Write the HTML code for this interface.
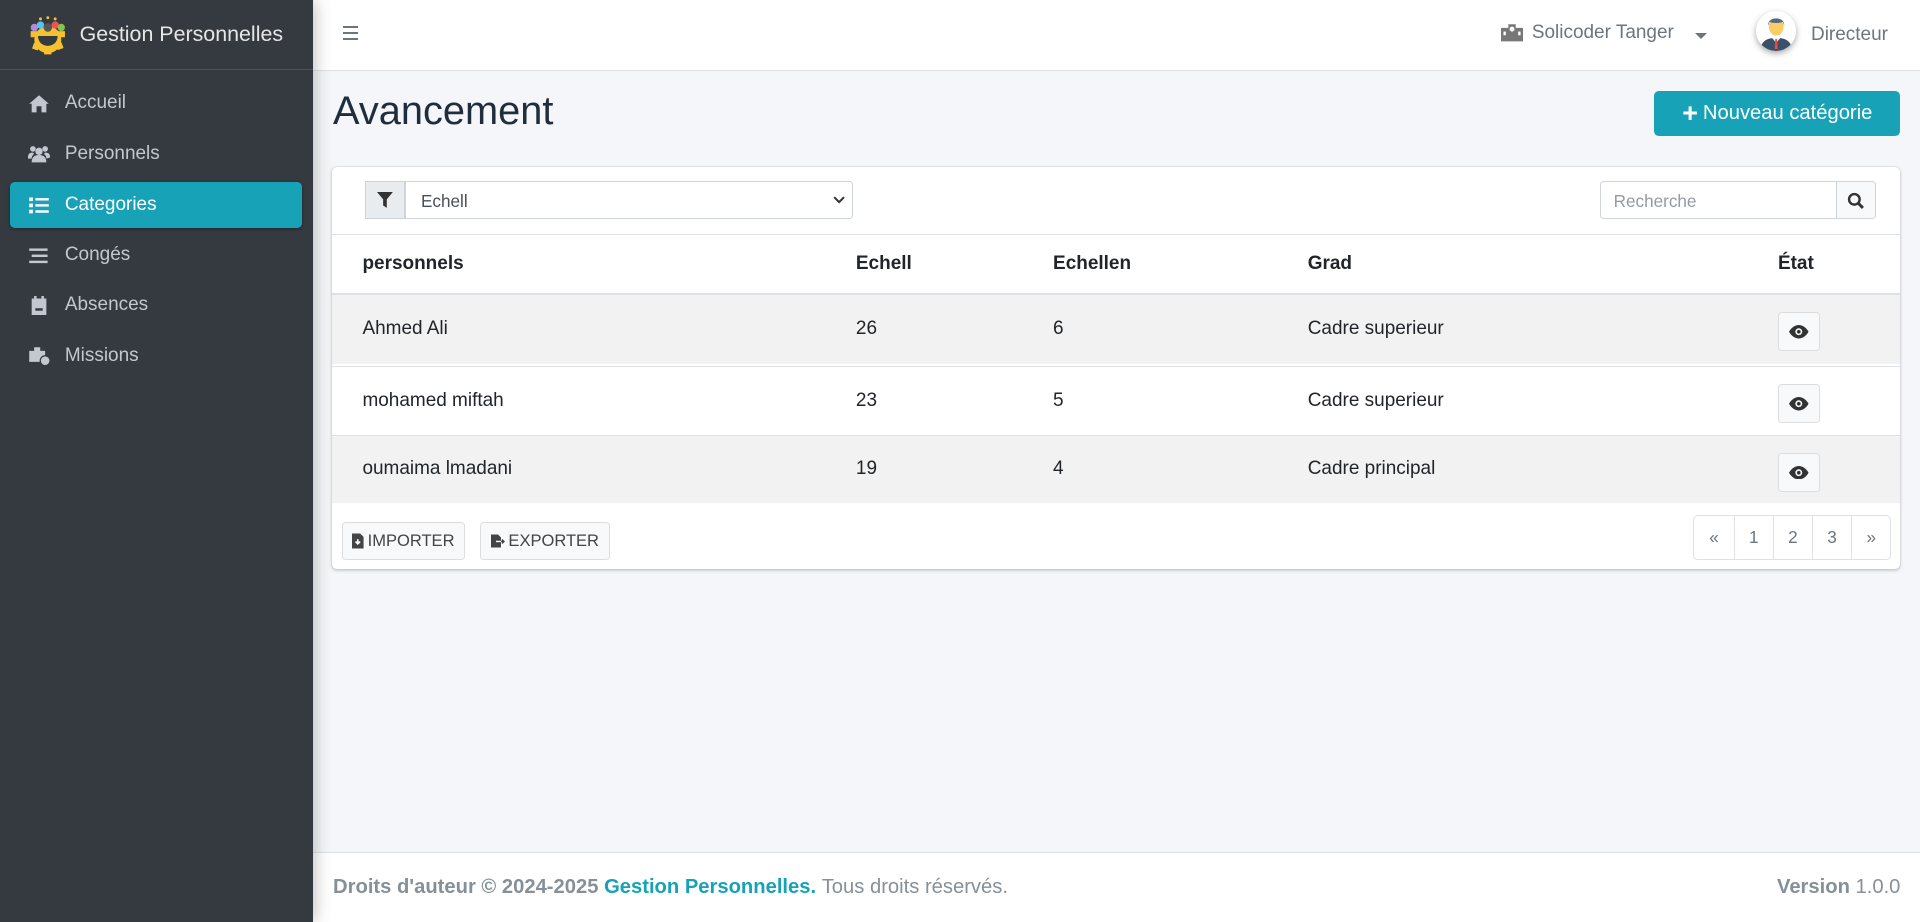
<!DOCTYPE html>
<html><head><meta charset="utf-8"><style>
html{zoom:1.22449}
*{box-sizing:border-box;margin:0;padding:0}
body{width:1568px;height:753px;overflow:hidden;font-family:"Liberation Sans",sans-serif;background:#f4f6f9;position:relative;color:#212529}
.sb{position:absolute;left:0;top:0;width:256px;height:753px;background:#343a40;box-shadow:0 0 14px rgba(0,0,0,.3);z-index:2}
.brand{height:57px;border-bottom:1px solid #4b545c;display:flex;align-items:center;padding-left:22px;color:#e6e6e6;font-size:17.5px}
.brand svg{margin-right:9px}
.it{position:absolute;left:8px;width:239px;height:37px;display:flex;align-items:center;padding-left:15px;color:#c2c7d0;font-size:15.5px;border-radius:4px}
.it svg{width:18px;height:16px;margin-right:12px;fill:#c2c7d0}
.it.on{background:#17a2b8;color:#fff;box-shadow:0 1px 3px rgba(0,0,0,.3)}
.it.on svg{fill:#fff}
.top{position:absolute;left:256px;top:0;right:0;height:58px;background:#fff;border-bottom:1px solid #dee2e6}
.title{position:absolute;left:272px;top:73px;font-size:32.5px;color:#1f2d3d}
.btn{position:absolute;left:1351px;top:74px;width:201px;height:37px;background:#17a2b8;border-radius:4px;color:#fff;font-size:16.5px;display:flex;align-items:center;justify-content:center}
.card{position:absolute;left:271px;top:136px;width:1281px;height:329px;background:#fff;border-radius:4px;box-shadow:0 0 1px rgba(0,0,0,.2),0 1px 3px rgba(0,0,0,.2);overflow:hidden}
.th{position:absolute;top:55px;left:0;right:0;height:50px;border-top:1px solid #dee2e6;border-bottom:2px solid #dee2e6;font-weight:bold;font-size:15.5px}
.row{position:absolute;left:0;right:0;height:56px;font-size:15.5px;border-top:1px solid #dee2e6}
.c{position:absolute;top:50%;transform:translateY(-50%)}
.eye{position:absolute;left:1181px;top:14px;width:34px;height:32px;border:1px solid #ddd;background:#f8f9fa;border-radius:3px;display:flex;align-items:center;justify-content:center}
.sbtn{position:absolute;top:290px;height:31px;border:1px solid #ddd;background:#f8f9fa;border-radius:3px;font-size:13.5px;display:flex;align-items:center;padding:0 8px 0 8px;color:#444}
.pg{position:absolute;left:1112px;top:285px;height:36px;display:flex;border:1px solid #dee2e6;border-radius:4px}
.pg div{width:32px;display:flex;align-items:center;justify-content:center;font-size:14px;color:#6c757d;border-left:1px solid #dee2e6}
.pg div:first-child{border-left:0}
.foot{position:absolute;left:256px;right:0;top:696px;height:57px;background:#fff;border-top:1px solid #dee2e6;font-size:16.5px;color:#869099;display:flex;align-items:center;padding:0 16px}
</style></head><body>
<div class="sb">
<div class="brand"><svg width="34" height="34" viewBox="0 0 34 34"><g fill="#f5c12e"><circle cx="17" cy="21" r="11"/><rect x="3" y="14" width="28" height="5"/><rect x="5" y="24" width="5" height="5" transform="rotate(20 7 26)"/><rect x="24" y="24" width="5" height="5" transform="rotate(-20 26 26)"/><rect x="14" y="28" width="6" height="5"/></g><path d="M9 18h16c0 5-3.5 8-8 8s-8-3-8-8z" fill="#343a40"/><circle cx="6" cy="11" r="3" fill="#b48ad8"/><circle cx="11" cy="9" r="3" fill="#4fc3f7"/><circle cx="17" cy="11" r="3.5" fill="#555"/><circle cx="23" cy="9" r="3" fill="#ef5350"/><circle cx="28" cy="11" r="3" fill="#8bc34a"/><circle cx="11" cy="4" r="1.2" fill="#f5c12e"/><circle cx="17" cy="3" r="1.2" fill="#f5c12e"/><circle cx="23" cy="4" r="1.2" fill="#f5c12e"/></svg>Gestion Personnelles</div>
<div class="it" style="top:66px"><svg viewBox="0 0 18 16"><path d="M9 1 1 8h2v7h4v-5h4v5h4V8h2z"/></svg>Accueil</div>
<div class="it" style="top:107px"><svg viewBox="0 0 18 16"><circle cx="4" cy="4" r="2.3"/><circle cx="14" cy="4" r="2.3"/><circle cx="9" cy="6" r="3"/><path d="M3 15c0-4 2-6 6-6s6 2 6 6zM0 11c0-3 1-4 4-4l1 1c-1 1-2 2-2 4H0zM18 11c0-3-1-4-4-4l-1 1c1 1 2 2 2 4z"/></svg>Personnels</div>
<div class="it on" style="top:149px"><svg viewBox="0 0 18 16"><rect x="1" y="2" width="3" height="3"/><rect x="1" y="7" width="3" height="3"/><rect x="1" y="12" width="3" height="3"/><rect x="6" y="2.5" width="11" height="2"/><rect x="6" y="7.5" width="11" height="2"/><rect x="6" y="12.5" width="11" height="2"/></svg>Categories</div>
<div class="it" style="top:190px"><svg viewBox="0 0 18 16"><rect x="1" y="2" width="15" height="2"/><rect x="3" y="7" width="13" height="2"/><rect x="1" y="12" width="15" height="2"/></svg>Congés</div>
<div class="it" style="top:231px"><svg viewBox="0 0 18 16"><path d="M3 2h12v14H3zM5 0h2v3H5zM11 0h2v3h-2z"/><rect x="6" y="10" width="6" height="2" fill="#343a40"/></svg>Absences</div>
<div class="it" style="top:272px"><svg viewBox="0 0 18 16"><path d="M1 4h13v9H1zM5 1h5v3H5z"/><circle cx="14" cy="12" r="4" fill="#c2c7d0" stroke="#343a40"/></svg>Missions</div>
</div>
<div class="top">
<div style="position:absolute;left:24px;top:21px;width:12px;"><div style="height:2px;background:#6c757d;margin-bottom:3px"></div><div style="height:2px;background:#6c757d;margin-bottom:3px"></div><div style="height:2px;background:#6c757d"></div></div>
<svg style="position:absolute;left:970px;top:19px" width="18" height="15" viewBox="0 0 18 15"><path d="M0 4h6V1h6v3h6v11H0z" fill="#777"/><rect x="2" y="7" width="2" height="3" fill="#fff"/><rect x="14" y="7" width="2" height="3" fill="#fff"/><circle cx="9" cy="5" r="2" fill="#fff"/></svg>
<div style="position:absolute;left:995px;top:18px;font-size:15.5px;color:#6c757d">Solicoder Tanger</div>
<div style="position:absolute;left:1128px;top:27px;border:5px solid transparent;border-top-color:#6c757d"></div>
<svg style="position:absolute;left:1178px;top:9px;border-radius:50%;box-shadow:0 2px 5px rgba(0,0,0,.35)" width="33" height="33" viewBox="0 0 33 33"><circle cx="16.5" cy="16.5" r="16.5" fill="#fff"/><path d="M4 29c2-6 7-7 12.5-7S27 23 29 29a16 16 0 0 1-25 0z" fill="#3a5068"/><path d="M13 22h7l-3.5 4z" fill="#eee"/><path d="M15.8 23h1.4l.6 8h-2.6z" fill="#e74c3c"/><ellipse cx="16.5" cy="13" rx="6" ry="7" fill="#f9cd64"/><path d="M10 12c-1-8 14-8 13 0l-1-3c-3 1-8 1-11 0z" fill="#556a7e"/></svg>
<div style="position:absolute;left:1223px;top:20px;font-size:15.5px;color:#6c757d">Directeur</div>
</div>
<div class="title">Avancement</div>
<div class="btn"><b style="font-size:22px;margin-right:4px">+</b>Nouveau catégorie</div>
<div class="card">
<div style="position:absolute;left:27px;top:12px;width:33px;height:31px;border:1px solid #ced4da;background:#e9ecef;display:flex;align-items:center;justify-content:center"><svg width="13" height="13" viewBox="0 0 13 13"><path d="M0 0h13L8 6v7L5 11V6z" fill="#333"/></svg></div>
<div style="position:absolute;left:60px;top:12px;width:366px;height:31px;border:1px solid #ced4da;border-radius:0 3px 3px 0;font-size:14px;color:#495057;padding:7px 12px">Echell<svg style="position:absolute;right:6px;top:11px" width="10" height="7" viewBox="0 0 10 7"><path d="M1 1l4 4 4-4" stroke="#333" stroke-width="1.6" fill="none"/></svg></div>
<div style="position:absolute;left:1036px;top:12px;width:193px;height:31px;border:1px solid #ced4da;border-radius:3px 0 0 3px;font-size:14px;color:#939ba2;padding:7px 10px">Recherche</div>
<div style="position:absolute;left:1228px;top:12px;width:33px;height:31px;border:1px solid #ced4da;border-radius:0 3px 3px 0;background:#f8f9fa;display:flex;align-items:center;justify-content:center"><svg width="14" height="14" viewBox="0 0 14 14"><circle cx="6" cy="6" r="4.3" stroke="#333" stroke-width="2" fill="none"/><path d="M9 9l4 4" stroke="#333" stroke-width="2.4"/></svg></div>
<div class="th"><span class="c" style="left:25px">personnels</span><span class="c" style="left:428px">Echell</span><span class="c" style="left:589px">Echellen</span><span class="c" style="left:797px">Grad</span><span class="c" style="left:1181px">État</span></div>
<div class="row" style="top:105px;background:#f2f2f2;border-top:0"><span class="c" style="left:25px">Ahmed Ali</span><span class="c" style="left:428px">26</span><span class="c" style="left:589px">6</span><span class="c" style="left:797px">Cadre superieur</span><div class="eye"><svg width="16" height="11" viewBox="0 0 16 11"><path d="M0 5.5C2 2 5 0 8 0s6 2 8 5.5C14 9 11 11 8 11S2 9 0 5.5z" fill="#333"/><circle cx="8" cy="5.5" r="2.8" fill="#f8f9fa"/><circle cx="8" cy="5.5" r="1.5" fill="#333"/></svg></div></div>
<div class="row" style="top:163px"><span class="c" style="left:25px">mohamed miftah</span><span class="c" style="left:428px">23</span><span class="c" style="left:589px">5</span><span class="c" style="left:797px">Cadre superieur</span><div class="eye"><svg width="16" height="11" viewBox="0 0 16 11"><path d="M0 5.5C2 2 5 0 8 0s6 2 8 5.5C14 9 11 11 8 11S2 9 0 5.5z" fill="#333"/><circle cx="8" cy="5.5" r="2.8" fill="#f8f9fa"/><circle cx="8" cy="5.5" r="1.5" fill="#333"/></svg></div></div>
<div class="row" style="top:219px;background:#f2f2f2"><span class="c" style="left:25px">oumaima lmadani</span><span class="c" style="left:428px">19</span><span class="c" style="left:589px">4</span><span class="c" style="left:797px">Cadre principal</span><div class="eye"><svg width="16" height="11" viewBox="0 0 16 11"><path d="M0 5.5C2 2 5 0 8 0s6 2 8 5.5C14 9 11 11 8 11S2 9 0 5.5z" fill="#333"/><circle cx="8" cy="5.5" r="2.8" fill="#f8f9fa"/><circle cx="8" cy="5.5" r="1.5" fill="#333"/></svg></div></div>
<div class="sbtn" style="left:8px;width:101px"><svg width="10" height="13" viewBox="0 0 10 13" style="margin-right:3px"><path d="M0 0h7l3 3v10H0z" fill="#444"/><path d="M5 5v4M3 7l2 2 2-2" stroke="#fff" stroke-width="1.4" fill="none"/></svg>IMPORTER</div>
<div class="sbtn" style="left:121px;width:106px"><svg width="14" height="13" viewBox="0 0 14 13" style="margin-right:3px"><path d="M0 0h7l3 3v10H0z" fill="#444"/><path d="M5 7h8M11 5l2 2-2 2" stroke="#444" stroke-width="1.4" fill="none"/><path d="M5 7h5" stroke="#fff" stroke-width="1.4"/></svg>EXPORTER</div>
<div class="pg"><div>«</div><div>1</div><div>2</div><div>3</div><div>»</div></div>
</div>
<div class="foot"><b>Droits d'auteur © 2024-2025&nbsp;</b><b style="color:#17a2b8">Gestion Personnelles.</b>&nbsp;Tous droits réservés.<span style="margin-left:auto"><b>Version</b> 1.0.0</span></div>
</body></html>
